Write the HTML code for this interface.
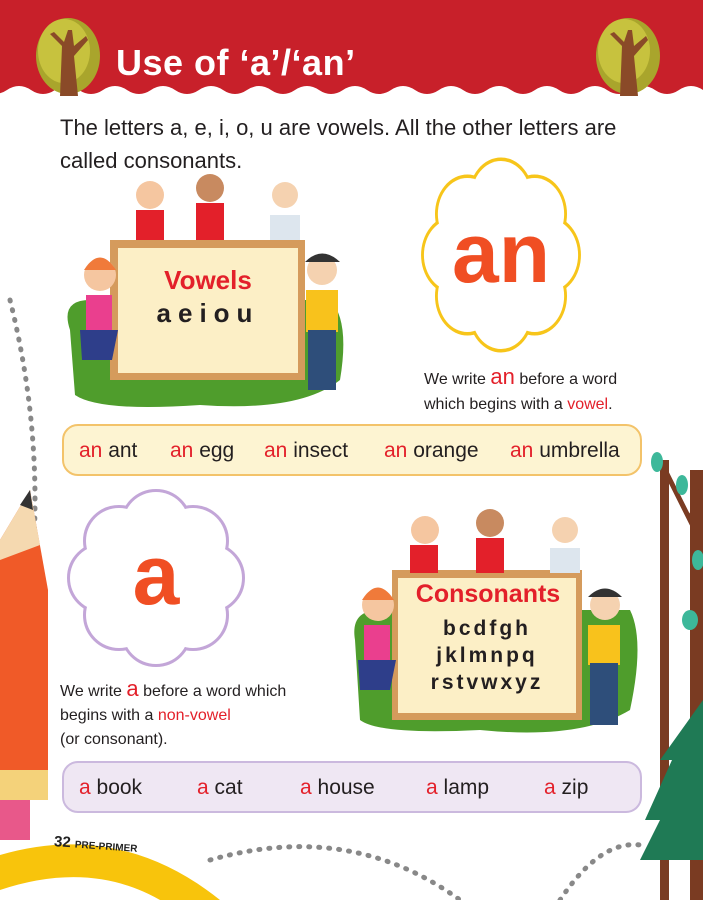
<!DOCTYPE html>
<html><head><meta charset="utf-8"><style>
*{margin:0;padding:0;box-sizing:border-box}
body{width:703px;height:900px;position:relative;overflow:hidden;background:#fff;font-family:"Liberation Sans",sans-serif;color:#231f20}
.abs{position:absolute}
.r{color:#e3202a}
.box{position:absolute;left:62px;width:580px;height:52px;border-radius:16px;font-size:21px;display:flex;align-items:center}
.box span{position:absolute;top:13px}
</style></head><body>
<svg class="abs" style="left:0;top:0" width="703" height="900">
<path d="M0 0H703V90 q-12 -8 -24 0 t-24 0 t-24 0 t-24 0 t-24 0 t-24 0 t-24 0 t-24 0 t-24 0 t-24 0 t-24 0 t-24 0 t-24 0 t-24 0 t-24 0 t-24 0 t-24 0 t-24 0 t-24 0 t-24 0 t-24 0 t-24 0 t-24 0 t-24 0 t-24 0 t-24 0 t-24 0 t-24 0 t-24 0 t-24 0 V0Z" fill="#c8202a"/>
<g transform="translate(68,56)"><ellipse cx="0" cy="0" rx="32" ry="38" fill="#a9a52c"/><ellipse cx="-4" cy="-5" rx="26" ry="32" fill="#c7c23e"/><path d="M-8 40 L-6 -10 L-18 -22 L-14 -24 L-4 -14 L0 -26 L4 -26 L6 -10 L18 -20 L20 -16 L6 0 L10 40Z" fill="#8a4a28"/></g>
<g transform="translate(628,56)"><ellipse cx="0" cy="0" rx="32" ry="38" fill="#a9a52c"/><ellipse cx="-4" cy="-5" rx="26" ry="32" fill="#c7c23e"/><path d="M-8 40 L-6 -10 L-18 -22 L-14 -24 L-4 -14 L0 -26 L4 -26 L6 -10 L18 -20 L20 -16 L6 0 L10 40Z" fill="#8a4a28"/></g>
<path d="M10 300 Q60 500 10 700" fill="none" stroke="#888" stroke-width="5" stroke-dasharray="1 9" stroke-linecap="round"/>
<path d="M210 860 Q350 820 460 900" fill="none" stroke="#888" stroke-width="5" stroke-dasharray="1 9" stroke-linecap="round"/>
<path d="M560 900 Q600 840 640 845" fill="none" stroke="#888" stroke-width="5" stroke-dasharray="1 9" stroke-linecap="round"/>
<path d="M0 855 Q120 820 220 900 L160 900 Q90 860 0 890Z" fill="#f8c40c"/>
<path d="M0 540 L30 490 L48 590 L48 770 L0 770Z" fill="#f05a28"/>
<path d="M0 540 L30 490 L40 545 L0 560Z" fill="#f5d9b0"/>
<path d="M20 505 L30 490 L33 510Z" fill="#333"/>
<rect x="0" y="770" width="48" height="30" fill="#f4d27a"/>
<rect x="0" y="800" width="30" height="40" fill="#e8588a"/>
<rect x="660" y="460" width="9" height="440" fill="#7a3b22"/>
<rect x="690" y="470" width="13" height="430" fill="#7a3b22"/>
<path d="M665 470 L690 520 L700 490" fill="none" stroke="#7a3b22" stroke-width="5"/>
<ellipse cx="657" cy="462" rx="6" ry="10" fill="#3db89a"/><ellipse cx="682" cy="485" rx="6" ry="10" fill="#3db89a"/><ellipse cx="690" cy="620" rx="8" ry="10" fill="#3db89a"/><ellipse cx="698" cy="560" rx="6" ry="10" fill="#3db89a"/>
<path d="M703 700 L660 760 L672 760 L645 820 L660 820 L640 860 L703 860Z" fill="#1f7a55"/>
<g transform="translate(501,255) scale(0.82,1)">
<g fill="none" stroke="#f7c51a" stroke-width="7">
<circle cx="0" cy="-58" r="36"/><circle cx="41" cy="-41" r="36"/><circle cx="58" cy="0" r="36"/><circle cx="41" cy="41" r="36"/><circle cx="0" cy="58" r="36"/><circle cx="-41" cy="41" r="36"/><circle cx="-58" cy="0" r="36"/><circle cx="-41" cy="-41" r="36"/></g>
<g fill="#fff"><circle r="60"/><circle cx="0" cy="-58" r="36"/><circle cx="41" cy="-41" r="36"/><circle cx="58" cy="0" r="36"/><circle cx="41" cy="41" r="36"/><circle cx="0" cy="58" r="36"/><circle cx="-41" cy="41" r="36"/><circle cx="-58" cy="0" r="36"/><circle cx="-41" cy="-41" r="36"/></g></g>
<text x="501" y="282" text-anchor="middle" font-family="Liberation Sans" font-weight="bold" font-size="84" fill="#f04e23">an</text>
<g transform="translate(156,578)">
<g fill="none" stroke="#c3a6d8" stroke-width="6">
<circle cx="0" cy="-53" r="33"/><circle cx="37" cy="-37" r="33"/><circle cx="53" cy="0" r="33"/><circle cx="37" cy="37" r="33"/><circle cx="0" cy="53" r="33"/><circle cx="-37" cy="37" r="33"/><circle cx="-53" cy="0" r="33"/><circle cx="-37" cy="-37" r="33"/></g>
<g fill="#fff"><circle r="55"/><circle cx="0" cy="-53" r="33"/><circle cx="37" cy="-37" r="33"/><circle cx="53" cy="0" r="33"/><circle cx="37" cy="37" r="33"/><circle cx="0" cy="53" r="33"/><circle cx="-37" cy="37" r="33"/><circle cx="-53" cy="0" r="33"/><circle cx="-37" cy="-37" r="33"/></g>
<text x="0" y="26" text-anchor="middle" font-family="Liberation Sans" font-weight="bold" font-size="84" fill="#f04e23">a</text></g>
<g>
<path d="M70 330 Q60 300 90 300 L330 300 Q350 320 340 380 Q300 412 200 405 Q100 412 75 395Z" fill="#4f9d2c"/>
<rect x="110" y="240" width="195" height="140" fill="#d59b5c"/>
<rect x="118" y="248" width="180" height="125" fill="#fcefc6"/>
<circle cx="150" cy="195" r="14" fill="#f5c6a0"/><rect x="136" y="210" width="28" height="30" fill="#e3202a"/>
<circle cx="210" cy="188" r="14" fill="#c88a60"/><rect x="196" y="203" width="28" height="37" fill="#e3202a"/>
<circle cx="285" cy="195" r="13" fill="#f5d2b0"/><rect x="270" y="215" width="30" height="25" fill="#dde6ee"/>
<circle cx="100" cy="275" r="16" fill="#f5c6a0"/><path d="M84 270 Q100 245 116 270" fill="#f07a3a"/><rect x="86" y="295" width="26" height="35" fill="#ea3f8e"/><path d="M80 330 L118 330 L112 360 L82 360Z" fill="#2e3e8a"/>
<circle cx="322" cy="270" r="15" fill="#f5d2b0"/><path d="M305 262 Q322 245 340 262" fill="#333"/><rect x="306" y="290" width="32" height="42" fill="#f8c21c"/><rect x="308" y="330" width="28" height="60" fill="#2e4e7a"/>
</g>
<g>
<path d="M355 640 Q350 610 380 610 L630 610 Q645 640 630 710 Q580 740 480 730 Q380 735 360 720Z" fill="#4f9d2c"/>
<rect x="392" y="570" width="190" height="150" fill="#d59b5c"/>
<rect x="398" y="578" width="178" height="135" fill="#fcefc6"/>
<circle cx="425" cy="530" r="14" fill="#f5c6a0"/><rect x="410" y="545" width="28" height="28" fill="#e3202a"/>
<circle cx="490" cy="523" r="14" fill="#c88a60"/><rect x="476" y="538" width="28" height="35" fill="#e3202a"/>
<circle cx="565" cy="530" r="13" fill="#f5d2b0"/><rect x="550" y="548" width="30" height="25" fill="#dde6ee"/>
<circle cx="378" cy="605" r="16" fill="#f5c6a0"/><path d="M362 600 Q378 575 394 600" fill="#f07a3a"/><rect x="364" y="625" width="26" height="35" fill="#ea3f8e"/><path d="M358 660 L396 660 L390 690 L360 690Z" fill="#2e3e8a"/>
<circle cx="605" cy="605" r="15" fill="#f5d2b0"/><path d="M588 597 Q605 580 622 597" fill="#333"/><rect x="588" y="625" width="32" height="40" fill="#f8c21c"/><rect x="590" y="663" width="28" height="62" fill="#2e4e7a"/>
</g>
</svg>
<div class="abs" style="left:116px;top:42px;font-size:36px;font-weight:bold;color:#fff;letter-spacing:0.5px">Use of ‘a’/‘an’</div>
<div class="abs" style="left:60px;top:111px;font-size:22px;line-height:33px;color:#231f20;width:600px">The letters a, e, i, o, u are vowels. All the other letters are called consonants.</div>
<div class="abs" style="left:118px;top:265px;width:180px;text-align:center;font-size:26px;font-weight:bold;color:#e3202a">Vowels</div>
<div class="abs" style="left:118px;top:298px;width:180px;text-align:center;font-size:26px;font-weight:bold;letter-spacing:7px">aeiou</div>
<div class="abs" style="left:424px;top:364px;font-size:16px;line-height:25px">We write <span class="r" style="font-size:22px">an</span> before a word<br>which begins with a <span class="r">vowel</span>.</div>
<div class="box" style="top:424px;background:#fdf4d2;border:2px solid #f3c36a">
<span style="left:15px"><i class="r" style="font-style:normal">an</i> ant</span><span style="left:106px"><i class="r" style="font-style:normal">an</i> egg</span><span style="left:200px"><i class="r" style="font-style:normal">an</i> insect</span><span style="left:320px"><i class="r" style="font-style:normal">an</i> orange</span><span style="left:446px"><i class="r" style="font-style:normal">an</i> umbrella</span></div>
<div class="abs" style="left:398px;top:580px;width:180px;text-align:center;font-size:25px;font-weight:bold;color:#e3202a">Consonants</div>
<div class="abs" style="left:398px;top:615px;width:178px;text-align:center;font-size:21px;font-weight:bold;line-height:27px;letter-spacing:3px">bcdfgh<br>jklmnpq<br>rstvwxyz</div>
<div class="abs" style="left:60px;top:677px;font-size:16px;line-height:24px">We write <span class="r" style="font-size:22px">a</span> before a word which<br>begins with a <span class="r">non-vowel</span><br>(or consonant).</div>
<div class="box" style="top:761px;background:#efe7f3;border:2px solid #cbb9de">
<span style="left:15px"><i class="r" style="font-style:normal">a</i> book</span><span style="left:133px"><i class="r" style="font-style:normal">a</i> cat</span><span style="left:236px"><i class="r" style="font-style:normal">a</i> house</span><span style="left:362px"><i class="r" style="font-style:normal">a</i> lamp</span><span style="left:480px"><i class="r" style="font-style:normal">a</i> zip</span></div>
<div class="abs" style="left:54px;top:836px;font-size:15px;font-weight:bold;color:#222;transform:rotate(4deg)">32 <span style="font-size:10px">PRE-PRIMER</span></div>
</body></html>
